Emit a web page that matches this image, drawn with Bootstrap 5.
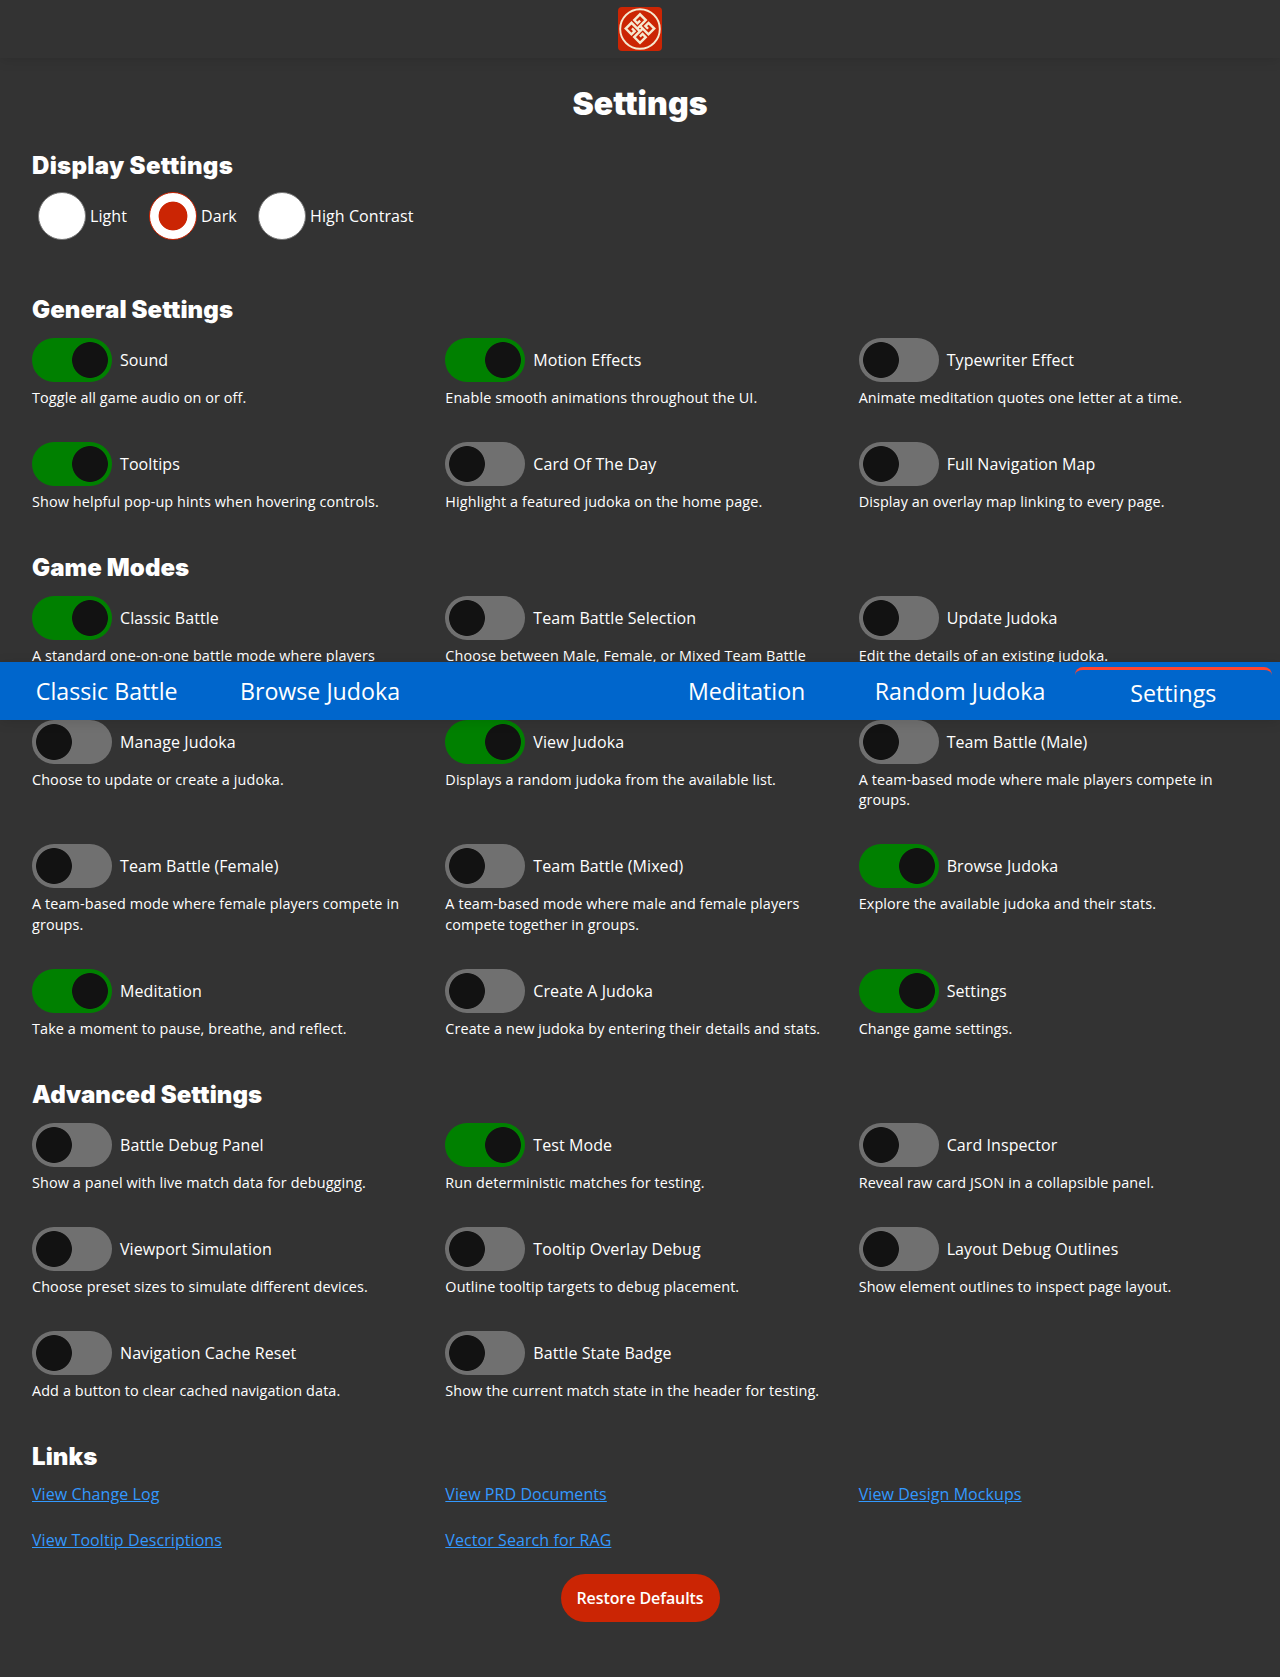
<!DOCTYPE html>
<html lang="en" data-bs-theme="dark">
<head>
<meta charset="utf-8">
<meta name="viewport" content="width=device-width, initial-scale=1">
<title>Settings</title>
<link href="https://cdn.jsdelivr.net/npm/bootstrap@5.3.0/dist/css/bootstrap.min.css" rel="stylesheet">
<script src="https://cdn.jsdelivr.net/npm/bootstrap@5.3.0/dist/js/bootstrap.bundle.min.js" defer></script>
<style>
body{background:#333;color:#fff;font-family:"Open Sans",sans-serif;font-size:16px;line-height:24px;letter-spacing:.08px;min-height:1677px}
.top-bar{height:58px;box-shadow:0 2px 12px rgba(0,0,0,.12)}
.page-body{padding:0 32px}
h1,h2{font-family:Inter,"Open Sans",sans-serif;font-weight:900;white-space:nowrap;margin:0}
h1{font-size:32px;line-height:40px;padding-top:26px;height:86px;letter-spacing:.05px}
h2{font-size:24px;line-height:28px;height:50px;padding-top:8px;letter-spacing:.08px}
.title-display{letter-spacing:.32px}
.theme-list{padding:48px 0 0 6px;margin-top:-50px;height:144px}
.theme-list .form-check-input{width:48px;height:48px;margin:0 4px 0 0;float:none;background:#fff;border:1px solid #767676;flex:none}
.theme-list .form-check-input:checked{border-color:#cb2504;background:radial-gradient(circle,#cb2504 14px,#fff 14.8px)}
.opt{padding-bottom:33.82px}
.opt-tall{padding-bottom:54.02px}
.opt .form-check-input{width:80px;height:44px;margin:0;border:0;border-radius:22px;background:radial-gradient(circle at 22px 22px,#121212 17.5px,#707070 18.3px);flex:none}
.opt .form-check-input:checked{background:radial-gradient(circle at 58px 22px,#121212 17.5px,#008000 18.3px)}
.opt p{font-size:14.4px;line-height:20.2px;margin:6px 0 0;letter-spacing:.11px}
.link-cell{height:46px}
.link-cell a{color:#3399ff}
.restore{background:#cb2504;color:#fff;border:0;border-radius:24px;height:48px;width:159px;padding:0;font-weight:600;letter-spacing:-.08px}
.bottom-bar{position:absolute;top:662px;left:0;width:100%;height:58px;background:#06c;box-shadow:0 2px 12px rgba(0,0,0,.12);font-size:23.2px;letter-spacing:0}
.bottom-bar>*{flex:1 1 0;margin:0 8px}
.bottom-bar a{color:#fff;text-decoration:none;line-height:58px;text-align:center;white-space:nowrap}
.bottom-bar a.current{border-top:3px solid #ff4530;border-radius:8px;height:52px;line-height:46px;margin-top:5px}
</style>
</head>
<body>
<header class="top-bar d-flex justify-content-center align-items-center">
<svg width="44" height="44" viewBox="0 0 44 44"><rect width="44" height="44" rx="4" fill="#cb2504"/><g fill="none" stroke="#f5e9d0"><circle cx="22" cy="22" r="19.8" stroke-width="1.9"/><g transform="translate(22 21.6) rotate(45)" stroke-width="2.4"><path id="k" d="M-1.9 1.9V-10.1H-10.1V-2H-5.6V-5.8"/><use href="#k" transform="rotate(90)"/><use href="#k" transform="rotate(180)"/><use href="#k" transform="rotate(270)"/></g></g></svg>
</header>
<main class="page-body">
<h1 class="text-center">Settings</h1>
<section><h2 class="title-display">Display Settings</h2>
<div class="theme-list d-flex align-items-start">
<label class="d-flex align-items-center" style="width:111px"><input class="form-check-input" type="radio" name="theme">Light</label>
<label class="d-flex align-items-center" style="width:109px"><input class="form-check-input" type="radio" name="theme" checked>Dark</label>
<label class="d-flex align-items-center"><input class="form-check-input" type="radio" name="theme">High Contrast</label>
</div></section>
<section><h2>General Settings</h2>
<div class="row">
<div class="col-4 opt"><label class="d-flex align-items-center gap-2"><input class="form-check-input" type="checkbox" checked>Sound</label><p>Toggle all game audio on or off.</p></div>
<div class="col-4 opt"><label class="d-flex align-items-center gap-2"><input class="form-check-input" type="checkbox" checked>Motion Effects</label><p>Enable smooth animations throughout the UI.</p></div>
<div class="col-4 opt"><label class="d-flex align-items-center gap-2"><input class="form-check-input" type="checkbox">Typewriter Effect</label><p>Animate meditation quotes one letter at a time.</p></div>
<div class="col-4 opt"><label class="d-flex align-items-center gap-2"><input class="form-check-input" type="checkbox" checked>Tooltips</label><p>Show helpful pop-up hints when hovering controls.</p></div>
<div class="col-4 opt"><label class="d-flex align-items-center gap-2"><input class="form-check-input" type="checkbox">Card Of The Day</label><p>Highlight a featured judoka on the home page.</p></div>
<div class="col-4 opt"><label class="d-flex align-items-center gap-2"><input class="form-check-input" type="checkbox">Full Navigation Map</label><p>Display an overlay map linking to every page.</p></div>
</div></section>
<section><h2>Game Modes</h2>
<div class="row">
<div class="col-4 opt opt-tall"><label class="d-flex align-items-center gap-2"><input class="form-check-input" type="checkbox" checked>Classic Battle</label><p>A standard one-on-one battle mode where players</p></div>
<div class="col-4 opt"><label class="d-flex align-items-center gap-2"><input class="form-check-input" type="checkbox">Team Battle Selection</label><p>Choose between Male, Female, or Mixed Team Battle</p></div>
<div class="col-4 opt"><label class="d-flex align-items-center gap-2"><input class="form-check-input" type="checkbox">Update Judoka</label><p>Edit the details of an existing judoka.</p></div>
<div class="col-4 opt"><label class="d-flex align-items-center gap-2"><input class="form-check-input" type="checkbox">Manage Judoka</label><p>Choose to update or create a judoka.</p></div>
<div class="col-4 opt"><label class="d-flex align-items-center gap-2"><input class="form-check-input" type="checkbox" checked>View Judoka</label><p>Displays a random judoka from the available list.</p></div>
<div class="col-4 opt"><label class="d-flex align-items-center gap-2"><input class="form-check-input" type="checkbox">Team Battle (Male)</label><p>A team-based mode where male players compete in groups.</p></div>
<div class="col-4 opt"><label class="d-flex align-items-center gap-2"><input class="form-check-input" type="checkbox">Team Battle (Female)</label><p>A team-based mode where female players compete in groups.</p></div>
<div class="col-4 opt"><label class="d-flex align-items-center gap-2"><input class="form-check-input" type="checkbox">Team Battle (Mixed)</label><p>A team-based mode where male and female players compete together in groups.</p></div>
<div class="col-4 opt"><label class="d-flex align-items-center gap-2"><input class="form-check-input" type="checkbox" checked>Browse Judoka</label><p>Explore the available judoka and their stats.</p></div>
<div class="col-4 opt"><label class="d-flex align-items-center gap-2"><input class="form-check-input" type="checkbox" checked>Meditation</label><p>Take a moment to pause, breathe, and reflect.</p></div>
<div class="col-4 opt"><label class="d-flex align-items-center gap-2"><input class="form-check-input" type="checkbox">Create A Judoka</label><p>Create a new judoka by entering their details and stats.</p></div>
<div class="col-4 opt"><label class="d-flex align-items-center gap-2"><input class="form-check-input" type="checkbox" checked>Settings</label><p>Change game settings.</p></div>
</div></section>
<section><h2>Advanced Settings</h2>
<div class="row">
<div class="col-4 opt"><label class="d-flex align-items-center gap-2"><input class="form-check-input" type="checkbox">Battle Debug Panel</label><p>Show a panel with live match data for debugging.</p></div>
<div class="col-4 opt"><label class="d-flex align-items-center gap-2"><input class="form-check-input" type="checkbox" checked>Test Mode</label><p>Run deterministic matches for testing.</p></div>
<div class="col-4 opt"><label class="d-flex align-items-center gap-2"><input class="form-check-input" type="checkbox">Card Inspector</label><p>Reveal raw card JSON in a collapsible panel.</p></div>
<div class="col-4 opt"><label class="d-flex align-items-center gap-2"><input class="form-check-input" type="checkbox">Viewport Simulation</label><p>Choose preset sizes to simulate different devices.</p></div>
<div class="col-4 opt"><label class="d-flex align-items-center gap-2"><input class="form-check-input" type="checkbox">Tooltip Overlay Debug</label><p>Outline tooltip targets to debug placement.</p></div>
<div class="col-4 opt"><label class="d-flex align-items-center gap-2"><input class="form-check-input" type="checkbox">Layout Debug Outlines</label><p>Show element outlines to inspect page layout.</p></div>
<div class="col-4 opt"><label class="d-flex align-items-center gap-2"><input class="form-check-input" type="checkbox">Navigation Cache Reset</label><p>Add a button to clear cached navigation data.</p></div>
<div class="col-4 opt"><label class="d-flex align-items-center gap-2"><input class="form-check-input" type="checkbox">Battle State Badge</label><p>Show the current match state in the header for testing.</p></div>
</div></section>
<section><h2 style="height:47px">Links</h2>
<div class="row">
<div class="col-4 link-cell"><a href="#">View Change Log</a></div>
<div class="col-4 link-cell"><a href="#">View PRD Documents</a></div>
<div class="col-4 link-cell"><a href="#">View Design Mockups</a></div>
<div class="col-4 link-cell"><a href="#">View Tooltip Descriptions</a></div>
<div class="col-4 link-cell"><a href="#">Vector Search for RAG</a></div>
</div></section>
<div class="text-center"><button class="btn restore">Restore Defaults</button></div>
</main>
<nav class="bottom-bar d-flex">
<a href="#">Classic Battle</a>
<a href="#">Browse Judoka</a>
<span></span>
<a href="#">Meditation</a>
<a href="#">Random Judoka</a>
<a href="#" class="current">Settings</a>
</nav>
</body>
</html>
